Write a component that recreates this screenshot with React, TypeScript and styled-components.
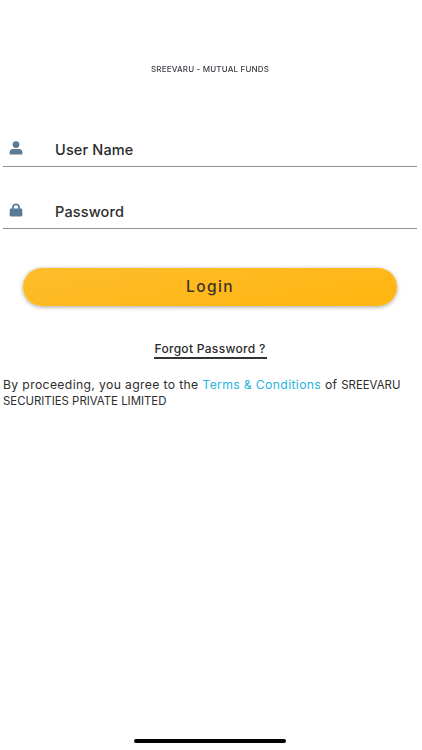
import React from "react";
import styled, { createGlobalStyle } from "styled-components";

const Global = createGlobalStyle`
  html, body { margin: 0; padding: 0; background: #fff; }
  #root { width: 422px; height: 750px; }
`;
const FONT = `Inter, "Open Sans", "Liberation Sans", sans-serif`;

const Page = styled.main`
  position: relative;
  width: 422px;
  height: 750px;
  box-sizing: border-box;
  padding: 63px 5px 0 3px;
  overflow: hidden;
  background: #fff;
  font-family: ${FONT};
  display: flex;
  flex-direction: column;
`;
const Brand = styled.div`
  height: 12px;
  line-height: 12px;
  text-align: center;
  font-size: 8px;
  font-weight: 500;
  color: #3d4248;
  letter-spacing: 0.18px;
  filter: blur(0.35px);
`;
const Fields = styled.div`
  margin-top: 50px;
  display: flex;
  flex-direction: column;
  gap: 20px;
`;
const Field = styled.div`
  height: 42px;
  box-sizing: border-box;
  border-bottom: 1px solid #8f8f8f;
  display: flex;
  align-items: flex-start;
  padding: 15px 0 0 6px;
`;
const IconSlot = styled.span`
  width: 14px;
  height: 14px;
  margin-top: 1px;
  display: flex;
  color: #5b7a93;
  svg { display: block; }
`;
const Label = styled.span`
  margin-left: 32px;
  font-size: 14.5px;
  line-height: 20px;
  font-weight: 500;
  letter-spacing: 0.15px;
  color: #2b2b2b;
`;
const LoginButton = styled.button`
  margin: 39px 0 0 20px;
  width: 374px;
  height: 38px;
  border: 0;
  border-radius: 19px;
  background: linear-gradient(170deg, #fdbd2b 0%, #ffb510 100%);
  box-shadow: 0 1px 4px rgba(60, 50, 20, 0.45);
  font-family: ${FONT};
  font-size: 15.5px;
  font-weight: 500;
  letter-spacing: 1.4px;
  color: #3a3326;
  padding: 0 0 2px;
`;
const ForgotWrap = styled.div`
  margin-top: 34px;
  display: flex;
  justify-content: center;
`;
const Forgot = styled.a`
  display: block;
  width: 113px;
  text-align: center;
  white-space: nowrap;
  font-size: 12px;
  line-height: 17px;
  font-weight: 500;
  letter-spacing: 0.3px;
  color: #2b2b2b;
  border-bottom: 2px solid #333;
`;
const Terms = styled.p`
  margin: 18px 0 0;
  font-size: 12.2px;
  line-height: 16px;
  letter-spacing: 0.36px;
  color: #2d2d2d;
  width: 414px;
`;
const TermsLink = styled.span`
  color: #27b4de;
`;
const Caps = styled.span`
  font-size: 11.4px;
  letter-spacing: 0;
`;
const HomeBar = styled.div`
  position: absolute;
  left: 134px;
  bottom: 7px;
  width: 152px;
  height: 4px;
  border-radius: 2px;
  background: #000;
`;

const UserIcon = () => (
  <svg width="14" height="14" viewBox="0 0 14 14" fill="currentColor">
    <circle cx="7" cy="3.6" r="3.4" />
    <path d="M0.6 13.4V11.4C0.6 9 2.4 7.9 4.2 7.9H9.8C11.6 7.9 13.4 9 13.4 11.4V13.4H0.6Z" />
  </svg>
);
const LockIcon = () => (
  <svg width="14" height="14" viewBox="0 0 14 14" fill="currentColor">
    <path d="M3 6V4.2C3 1.9 4.8 0.4 7 0.4S11 1.9 11 4.2V6H9.2V4.3C9.2 3 8.2 2.2 7 2.2S4.8 3 4.8 4.3V6H3Z" />
    <rect x="0.7" y="5.6" width="12.6" height="8" rx="1.4" />
  </svg>
);

export default function App() {
  return (
    <Page>
      <Global />
      <Brand>SREEVARU - MUTUAL FUNDS</Brand>
      <Fields>
        <Field>
          <IconSlot><UserIcon /></IconSlot>
          <Label>User Name</Label>
        </Field>
        <Field>
          <IconSlot><LockIcon /></IconSlot>
          <Label>Password</Label>
        </Field>
      </Fields>
      <LoginButton>Login</LoginButton>
      <ForgotWrap>
        <Forgot>Forgot Password ?</Forgot>
      </ForgotWrap>
      <Terms>
        By proceeding, you agree to the <TermsLink>Terms &amp; Conditions</TermsLink> of <Caps>SREEVARU SECURITIES PRIVATE LIMITED</Caps>
      </Terms>
      <HomeBar />
    </Page>
  );
}
